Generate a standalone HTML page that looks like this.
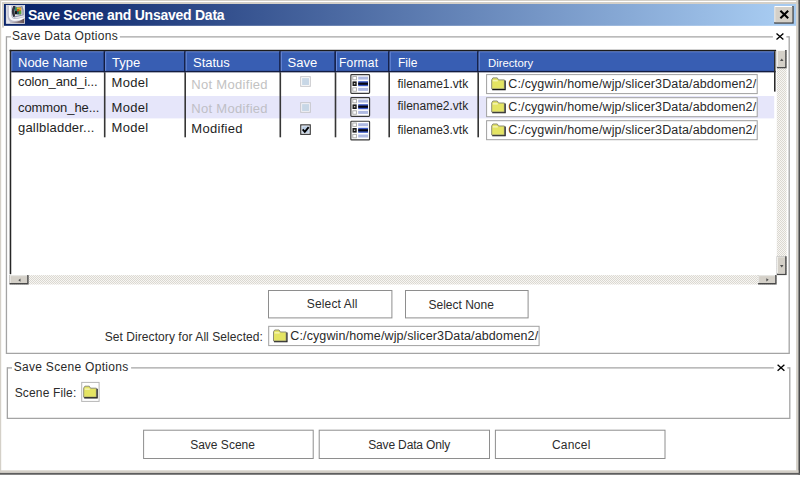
<!DOCTYPE html>
<html>
<head>
<meta charset="utf-8">
<title>Save Scene and Unsaved Data</title>
<style>
html,body{margin:0;padding:0;background:#fff;}
body{width:800px;height:488px;position:relative;overflow:hidden;font-family:"Liberation Sans",sans-serif;color:#000;}
svg.art{position:absolute;left:0;top:0;}
.t{position:absolute;white-space:nowrap;line-height:16px;height:16px;}
</style>
</head>
<body>
<svg class="art" width="800" height="488" viewBox="0 0 800 488">
<rect x="0" y="0" width="800" height="4" fill="#d4d0c8" />
<rect x="1" y="1" width="797" height="1" fill="#ffffff" />
<rect x="0" y="0" width="1.2" height="473" fill="#d4d0c8" />
<rect x="1.2" y="2" width="0.9" height="25" fill="#ffffff" />
<rect x="2" y="2" width="2" height="25.6" fill="#d4d0c8" />
<rect x="796.1" y="0" width="2.3" height="473" fill="#d4d0c8" />
<rect x="798.4" y="0" width="1.6" height="474.7" fill="#4a4a4a" />
<rect x="0" y="470.3" width="798.4" height="2.6" fill="#d4d0c8" />
<rect x="0" y="472.9" width="800" height="1.85" fill="#5e5e5e" />
<defs><linearGradient id="tg" x1="0" x2="1" y1="0" y2="0"><stop offset="0.03" stop-color="#0a246a"/><stop offset="0.97" stop-color="#a6caf0"/></linearGradient><pattern id="chk" width="2" height="2" patternUnits="userSpaceOnUse"><rect width="2" height="2" fill="#f7f6f3"/><rect width="1" height="1" fill="#dbd8d1"/><rect x="1" y="1" width="1" height="1" fill="#dbd8d1"/></pattern></defs>
<rect x="4" y="4" width="792.1" height="21.8" fill="url(#tg)" />
<rect x="774.2" y="6" width="19.5" height="17.7" fill="#484848" />
<rect x="774.2" y="6" width="18" height="16.2" fill="#ffffff" />
<rect x="775.2" y="7" width="17" height="15.2" fill="#d4d0c8" />
<path d="M780.4 10.8 L788.2 18.2 M788.2 10.8 L780.4 18.2" stroke="#000" stroke-width="2.1" fill="none"/>
<path d="M6.45 36.85 L11 36.85" stroke="#a4a4a4" stroke-width="1.3" fill="none"/>
<path d="M119.8 36.85 L772.9 36.85" stroke="#a4a4a4" stroke-width="1.3" fill="none"/>
<path d="M786.4 36.85 L789.2 36.85" stroke="#a4a4a4" stroke-width="1.3" fill="none"/>
<path d="M6.45 36.2 L6.45 354" stroke="#a4a4a4" stroke-width="1.3" fill="none"/>
<path d="M789.2 36.2 L789.2 354" stroke="#a4a4a4" stroke-width="1.3" fill="none"/>
<path d="M6.45 353.35 L789.2 353.35" stroke="#a4a4a4" stroke-width="1.3" fill="none"/>
<path d="M776.5 33.6 L783.4 39.6 M783.4 33.6 L776.5 39.6" stroke="#000" stroke-width="1.35" fill="none"/>
<path d="M7.35 367.9 L12 367.9" stroke="#a4a4a4" stroke-width="1.3" fill="none"/>
<path d="M131.1 367.9 L773.8 367.9" stroke="#a4a4a4" stroke-width="1.3" fill="none"/>
<path d="M787.3 367.9 L789.8 367.9" stroke="#a4a4a4" stroke-width="1.3" fill="none"/>
<path d="M7.35 367.25 L7.35 419" stroke="#a4a4a4" stroke-width="1.3" fill="none"/>
<path d="M789.8 367.25 L789.8 419" stroke="#a4a4a4" stroke-width="1.3" fill="none"/>
<path d="M7.35 418.35 L789.8 418.35" stroke="#a4a4a4" stroke-width="1.3" fill="none"/>
<path d="M777.6 364.8 L784.4 370.7 M784.4 364.8 L777.6 370.7" stroke="#000" stroke-width="1.35" fill="none"/>
<rect x="11.2" y="51.2" width="763" height="19.8" fill="#385eb3" />
<rect x="11.2" y="51.2" width="763" height="1.05" fill="#6d8ddb" />
<rect x="11.2" y="51.2" width="1.05" height="19.8" fill="#6d8ddb" />
<rect x="11.2" y="70.9" width="764.4" height="1.45" fill="#131c40" />
<rect x="11.2" y="96" width="763" height="22.4" fill="#e6e6fa" />
<rect x="9.7" y="49.8" width="766.3" height="1.45" fill="#1c1c1c" />
<rect x="9.7" y="49.8" width="1.55" height="224.4" fill="#262626" />
<rect x="103.9" y="72.3" width="1.6" height="65" fill="#363636" />
<rect x="103.6" y="51.2" width="1.55" height="21.1" fill="#131c40" />
<rect x="105.15" y="52.2" width="1" height="18.7" fill="#6d8ddb" />
<rect x="184.4" y="72.3" width="1.6" height="65" fill="#363636" />
<rect x="184.1" y="51.2" width="1.55" height="21.1" fill="#131c40" />
<rect x="185.65" y="52.2" width="1" height="18.7" fill="#6d8ddb" />
<rect x="279.5" y="72.3" width="1.6" height="65" fill="#363636" />
<rect x="279.2" y="51.2" width="1.55" height="21.1" fill="#131c40" />
<rect x="280.75" y="52.2" width="1" height="18.7" fill="#6d8ddb" />
<rect x="334.7" y="72.3" width="1.6" height="65" fill="#363636" />
<rect x="334.4" y="51.2" width="1.55" height="21.1" fill="#131c40" />
<rect x="335.95" y="52.2" width="1" height="18.7" fill="#6d8ddb" />
<rect x="388.4" y="72.3" width="1.6" height="65" fill="#363636" />
<rect x="388.1" y="51.2" width="1.55" height="21.1" fill="#131c40" />
<rect x="389.65" y="52.2" width="1" height="18.7" fill="#6d8ddb" />
<rect x="477.4" y="72.3" width="1.6" height="65" fill="#363636" />
<rect x="477.1" y="51.2" width="1.55" height="21.1" fill="#131c40" />
<rect x="478.65" y="52.2" width="1" height="18.7" fill="#6d8ddb" />
<rect x="774" y="51.2" width="1.55" height="40.4" fill="#2a2a2a" />
<rect x="776.8" y="50" width="9.8" height="225" fill="url(#chk)" />
<rect x="9.6" y="275.1" width="767" height="9.4" fill="url(#chk)" />
<rect x="776.8" y="50" width="9.8" height="18.3" fill="#484848" />
<rect x="776.8" y="50" width="8.3" height="16.8" fill="#f6f5f2" />
<rect x="777.8" y="51" width="7.3" height="15.8" fill="#d4d0c8" />
<rect x="776.8" y="256.3" width="9.8" height="18.8" fill="#484848" />
<rect x="776.8" y="256.3" width="8.3" height="17.3" fill="#f6f5f2" />
<rect x="777.8" y="257.3" width="7.3" height="16.3" fill="#d4d0c8" />
<rect x="9.5" y="275.1" width="19.1" height="9.4" fill="#484848" />
<rect x="9.5" y="275.1" width="17.6" height="7.9" fill="#f6f5f2" />
<rect x="10.5" y="276.1" width="16.6" height="6.9" fill="#d4d0c8" />
<rect x="758.1" y="275.1" width="18.5" height="9.4" fill="#484848" />
<rect x="758.1" y="275.1" width="17" height="7.9" fill="#f6f5f2" />
<rect x="759.1" y="276.1" width="16" height="6.9" fill="#d4d0c8" />
<path d="M780 60.9 L781.75 58.4 L783.5 60.9 Z" fill="#505050"/>
<path d="M780 265 L781.75 267.4 L783.5 265 Z" fill="#505050"/>
<path d="M20.5 278.6 L18.3 280.2 L20.5 281.8 Z" fill="#505050"/>
<path d="M766.3 278.2 L768.7 279.8 L766.3 281.4 Z" fill="#505050"/>
<rect x="300.2" y="76.2" width="10.6" height="10.6" fill="#c6c6ca" />
<rect x="301.2" y="77.2" width="8.6" height="8.6" fill="#ffffff" />
<rect x="302.1" y="78.1" width="6.9" height="6.9" fill="#c8d7e6" />
<rect x="300.2" y="102.2" width="10.6" height="10.6" fill="#c6c6ca" />
<rect x="301.2" y="103.2" width="8.6" height="8.6" fill="#f6f6fc" />
<rect x="302.1" y="104.1" width="6.9" height="6.9" fill="#c8d7e6" />
<rect x="300.2" y="124.3" width="10.6" height="10.6" fill="#2e2e2e" />
<rect x="301.3" y="125.4" width="8.4" height="8.4" fill="#eef2f8" />
<rect x="302.3" y="126.4" width="6.4" height="6.4" fill="#b9cce3" />
<path d="M302.7 129.4 L304.8 131.8 L308.7 127.2" stroke="#000" stroke-width="1.9" fill="none"/>
<g transform="translate(350.2 74)"><rect x="0.65" y="0.65" width="18.7" height="18.7" rx="0.8" fill="#fff" stroke="#383838" stroke-width="1.2"/><rect x="2.6" y="2.4" width="3.6" height="3.4" fill="#fff" stroke="#a8a8a8" stroke-width="0.9"/><rect x="8" y="2.6" width="9.8" height="3" fill="#aeb9e2"/><rect x="2.3" y="7.4" width="4.2" height="4.6" fill="#1a1a1a"/><rect x="3.7" y="9" width="1.4" height="1.4" fill="#c8c8c8"/><rect x="8" y="7.2" width="9.8" height="5" fill="#3a58c4"/><rect x="8" y="8.6" width="9.8" height="2.2" fill="#050510"/><rect x="2.6" y="13.8" width="3.6" height="3.4" fill="#fff" stroke="#a8a8a8" stroke-width="0.9"/><rect x="8" y="13.9" width="9.8" height="3" fill="#aeb9e2"/></g>
<g transform="translate(350.2 97)"><rect x="0.65" y="0.65" width="18.7" height="18.7" rx="0.8" fill="#fff" stroke="#383838" stroke-width="1.2"/><rect x="2.6" y="2.4" width="3.6" height="3.4" fill="#fff" stroke="#a8a8a8" stroke-width="0.9"/><rect x="8" y="2.6" width="9.8" height="3" fill="#aeb9e2"/><rect x="2.3" y="7.4" width="4.2" height="4.6" fill="#1a1a1a"/><rect x="3.7" y="9" width="1.4" height="1.4" fill="#c8c8c8"/><rect x="8" y="7.2" width="9.8" height="5" fill="#3a58c4"/><rect x="8" y="8.6" width="9.8" height="2.2" fill="#050510"/><rect x="2.6" y="13.8" width="3.6" height="3.4" fill="#fff" stroke="#a8a8a8" stroke-width="0.9"/><rect x="8" y="13.9" width="9.8" height="3" fill="#aeb9e2"/></g>
<g transform="translate(350.2 120.6)"><rect x="0.65" y="0.65" width="18.7" height="18.7" rx="0.8" fill="#fff" stroke="#383838" stroke-width="1.2"/><rect x="2.6" y="2.4" width="3.6" height="3.4" fill="#fff" stroke="#a8a8a8" stroke-width="0.9"/><rect x="8" y="2.6" width="9.8" height="3" fill="#aeb9e2"/><rect x="2.3" y="7.4" width="4.2" height="4.6" fill="#1a1a1a"/><rect x="3.7" y="9" width="1.4" height="1.4" fill="#c8c8c8"/><rect x="8" y="7.2" width="9.8" height="5" fill="#3a58c4"/><rect x="8" y="8.6" width="9.8" height="2.2" fill="#050510"/><rect x="2.6" y="13.8" width="3.6" height="3.4" fill="#fff" stroke="#a8a8a8" stroke-width="0.9"/><rect x="8" y="13.9" width="9.8" height="3" fill="#aeb9e2"/></g>
<rect x="486.6" y="74.6" width="270.6" height="19" fill="#fff" stroke="#a0a0a0" stroke-width="1"/>
<g transform="translate(491.2 77.4)"><path d="M0.5 2.4 L1.7 0.5 L6.1 0.5 L7.3 2.5 L13.2 2.5 L13.2 11.5 L0.5 11.5 Z" fill="#e4e463" stroke="#8e8e78" stroke-width="1"/><path d="M14 3 L14 12.2 L1 12.2" stroke="#151515" stroke-width="1.1" fill="none"/><path d="M1.6 3.4 L6.6 3.4" stroke="#fcfcd8" stroke-width="1"/></g>
<rect x="486.6" y="97.7" width="270.6" height="19" fill="#fff" stroke="#a0a0a0" stroke-width="1"/>
<g transform="translate(491.2 100.5)"><path d="M0.5 2.4 L1.7 0.5 L6.1 0.5 L7.3 2.5 L13.2 2.5 L13.2 11.5 L0.5 11.5 Z" fill="#e4e463" stroke="#8e8e78" stroke-width="1"/><path d="M14 3 L14 12.2 L1 12.2" stroke="#151515" stroke-width="1.1" fill="none"/><path d="M1.6 3.4 L6.6 3.4" stroke="#fcfcd8" stroke-width="1"/></g>
<rect x="486.6" y="120.7" width="270.6" height="19" fill="#fff" stroke="#a0a0a0" stroke-width="1"/>
<g transform="translate(491.2 123.5)"><path d="M0.5 2.4 L1.7 0.5 L6.1 0.5 L7.3 2.5 L13.2 2.5 L13.2 11.5 L0.5 11.5 Z" fill="#e4e463" stroke="#8e8e78" stroke-width="1"/><path d="M14 3 L14 12.2 L1 12.2" stroke="#151515" stroke-width="1.1" fill="none"/><path d="M1.6 3.4 L6.6 3.4" stroke="#fcfcd8" stroke-width="1"/></g>
<rect x="268.7" y="326.3" width="270.4" height="19.3" fill="#fff" stroke="#a0a0a0" stroke-width="1"/>
<g transform="translate(273 329.5)"><path d="M0.5 2.4 L1.7 0.5 L6.1 0.5 L7.3 2.5 L13.2 2.5 L13.2 11.5 L0.5 11.5 Z" fill="#e4e463" stroke="#8e8e78" stroke-width="1"/><path d="M14 3 L14 12.2 L1 12.2" stroke="#151515" stroke-width="1.1" fill="none"/><path d="M1.6 3.4 L6.6 3.4" stroke="#fcfcd8" stroke-width="1"/></g>
<rect x="81.7" y="382.4" width="17.4" height="19" fill="#fff" stroke="#b6b6b6" stroke-width="1"/>
<g transform="translate(83.2 385.7)"><path d="M0.5 2.4 L1.7 0.5 L6.1 0.5 L7.3 2.5 L13.2 2.5 L13.2 11.5 L0.5 11.5 Z" fill="#e4e463" stroke="#8e8e78" stroke-width="1"/><path d="M14 3 L14 12.2 L1 12.2" stroke="#151515" stroke-width="1.1" fill="none"/><path d="M1.6 3.4 L6.6 3.4" stroke="#fcfcd8" stroke-width="1"/></g>
<rect x="268.5" y="290.5" width="123.4" height="27.4" fill="#fff" stroke="#8e8e8e" stroke-width="1"/>
<rect x="405.5" y="290.5" width="122.6" height="27.4" fill="#fff" stroke="#8e8e8e" stroke-width="1"/>
<rect x="143.6" y="430.2" width="169.6" height="28.3" fill="#fff" stroke="#8e8e8e" stroke-width="1"/>
<rect x="319.2" y="430.2" width="170.3" height="28.3" fill="#fff" stroke="#8e8e8e" stroke-width="1"/>
<rect x="495.4" y="430.2" width="169.6" height="28.3" fill="#fff" stroke="#8e8e8e" stroke-width="1"/>
<g transform="translate(6 5)">
  <defs><filter id="bl" x="-10%" y="-10%" width="120%" height="120%"><feGaussianBlur stdDeviation="0.45"/></filter>
  <linearGradient id="brg" x1="0" x2="1" y1="0" y2="0"><stop offset="0.1" stop-color="#c2c0c8"/><stop offset="0.55" stop-color="#8a7a7e"/><stop offset="1" stop-color="#5e4a4c"/></linearGradient><clipPath id="ic"><rect x="0.2" y="0.4" width="18.5" height="18.1"/></clipPath></defs>
  <rect x="0.2" y="0.4" width="18.5" height="18.1" fill="#e6e6ec"/>
  <g clip-path="url(#ic)"><g filter="url(#bl)">
  <path d="M1.4 0 L6 0 L6 10 Q6.4 13.6 11 13.2 L19 11.2 L19 16 Q12 19.5 6 17.6 Q1.4 16 1.4 10 Z" fill="#bcbccc"/>
  <path d="M2.8 0 L5.2 0 L5.2 10.4 Q5.6 14.4 11 14 L19 12 L19 13.4 Q12 16.6 6.6 15.4 Q2.8 14.4 2.8 10 Z" fill="#fafafc"/>
  <path d="M3.5 16.2 Q12 18.4 19 12.8 L19 19 L5 19 Z" fill="url(#brg)"/>
  <path d="M7 1 Q11 -0.8 16.4 0.9 Q18.6 5 17.8 10.2 L8.2 12.4 Q5.6 7 7 1 Z" fill="#8a91a8"/>
  <path d="M8.4 1.9 Q11 0.9 15.2 1.8 Q16.8 5 16.4 9.4 L8.8 11.3 Q7.2 7 8.4 1.9 Z" fill="#ececf2"/>
  <path d="M7.2 0.9 Q8.2 0.3 9.4 0.8 Q7.9 6 9 11.3 L7.2 12 Q4.6 6.5 7.2 0.9Z" fill="#34343f"/>
  <rect x="8.9" y="2.5" width="6.3" height="6.8" fill="#151515"/>
  <rect x="9" y="2.5" width="2.1" height="3.6" fill="#2b8c6c"/>
  <rect x="10.8" y="2.5" width="2.4" height="2.1" fill="#cfc428"/>
  <rect x="13" y="2.5" width="2.2" height="3.2" fill="#e8a628"/>
  <rect x="11" y="4.4" width="2.4" height="2.2" fill="#e04a1a"/>
  <rect x="12.6" y="5.8" width="2.6" height="3.4" fill="#5aa634"/>
  <rect x="11" y="6.6" width="1.8" height="2.6" fill="#2e5e74"/>
  </g></g>
  <rect x="0.2" y="0.4" width="18.5" height="18.1" fill="none" stroke="#f4f4f6" stroke-width="0.6"/>
</g>
</svg>
<div class="t" style="left:28px;top:6px;font-size:14px;color:#fff;letter-spacing:-0.25px;font-weight:bold;line-height:18px;height:18px;">Save Scene and Unsaved Data</div>
<div class="t" style="left:12px;top:28px;font-size:12px;color:#2a2a2a;letter-spacing:0.32px;">Save Data Options</div>
<div class="t" style="left:18px;top:54.5px;font-size:13px;color:#fff;">Node Name</div>
<div class="t" style="left:112px;top:54.5px;font-size:13px;color:#fff;">Type</div>
<div class="t" style="left:193px;top:54.5px;font-size:13px;color:#fff;">Status</div>
<div class="t" style="left:287.5px;top:54.5px;font-size:13px;color:#fff;">Save</div>
<div class="t" style="left:339px;top:54.5px;font-size:12px;color:#fff;letter-spacing:0.2px;">Format</div>
<div class="t" style="left:398px;top:54.5px;font-size:12px;color:#fff;">File</div>
<div class="t" style="left:488px;top:55px;font-size:11.3px;color:#fff;">Directory</div>
<div class="t" style="left:18px;top:74.2px;font-size:13px;color:#1e1e1e;letter-spacing:-0.1px;">colon_and_i...</div>
<div class="t" style="left:18px;top:99.6px;font-size:13px;color:#1e1e1e;letter-spacing:-0.1px;">common_he...</div>
<div class="t" style="left:18px;top:120.2px;font-size:13px;color:#1e1e1e;letter-spacing:0.2px;">gallbladder...</div>
<div class="t" style="left:111.5px;top:74.7px;font-size:13px;color:#1e1e1e;letter-spacing:0.3px;">Model</div>
<div class="t" style="left:111.5px;top:100.2px;font-size:13px;color:#1e1e1e;letter-spacing:0.3px;">Model</div>
<div class="t" style="left:111.5px;top:120px;font-size:13px;color:#1e1e1e;letter-spacing:0.3px;">Model</div>
<div class="t" style="left:191.3px;top:76.7px;font-size:13px;color:#c2c2c2;letter-spacing:0.3px;">Not Modified</div>
<div class="t" style="left:191.3px;top:100.5px;font-size:13px;color:#bfbfc6;letter-spacing:0.3px;">Not Modified</div>
<div class="t" style="left:191.3px;top:121px;font-size:13px;color:#1e1e1e;letter-spacing:0.3px;">Modified</div>
<div class="t" style="left:397.5px;top:75.8px;font-size:12px;color:#262626;">filename1.vtk</div>
<div class="t" style="left:397.5px;top:98.3px;font-size:12px;color:#262626;">filename2.vtk</div>
<div class="t" style="left:397.5px;top:121.5px;font-size:12px;color:#262626;">filename3.vtk</div>
<div class="t" style="left:508.3px;top:76.1px;font-size:12.5px;color:#2a2a2a;letter-spacing:0.12px;">C:/cygwin/home/wjp/slicer3Data/abdomen2/</div>
<div class="t" style="left:508.3px;top:99.1px;font-size:12.5px;color:#2a2a2a;letter-spacing:0.12px;">C:/cygwin/home/wjp/slicer3Data/abdomen2/</div>
<div class="t" style="left:508.3px;top:122.1px;font-size:12.5px;color:#2a2a2a;letter-spacing:0.12px;">C:/cygwin/home/wjp/slicer3Data/abdomen2/</div>
<div class="t" style="left:306.8px;top:296px;font-size:12px;color:#2c2c2c;letter-spacing:0.15px;">Select All</div>
<div class="t" style="left:428.5px;top:297.2px;font-size:12px;color:#2c2c2c;">Select None</div>
<div class="t" style="left:104.7px;top:329px;font-size:12px;color:#2c2c2c;letter-spacing:0.07px;">Set Directory for All Selected:</div>
<div class="t" style="left:290.3px;top:327.6px;font-size:12.5px;color:#2a2a2a;letter-spacing:0.12px;">C:/cygwin/home/wjp/slicer3Data/abdomen2/</div>
<div class="t" style="left:13.7px;top:359.4px;font-size:12px;color:#2a2a2a;letter-spacing:0.3px;">Save Scene Options</div>
<div class="t" style="left:14.7px;top:385.2px;font-size:12px;color:#2c2c2c;letter-spacing:0.15px;">Scene File:</div>
<div class="t" style="left:190.2px;top:437px;font-size:12px;color:#2c2c2c;">Save Scene</div>
<div class="t" style="left:368.2px;top:437px;font-size:12px;color:#2c2c2c;letter-spacing:-0.15px;">Save Data Only</div>
<div class="t" style="left:552px;top:437px;font-size:12px;color:#2c2c2c;letter-spacing:0.2px;">Cancel</div>
</body>
</html>
